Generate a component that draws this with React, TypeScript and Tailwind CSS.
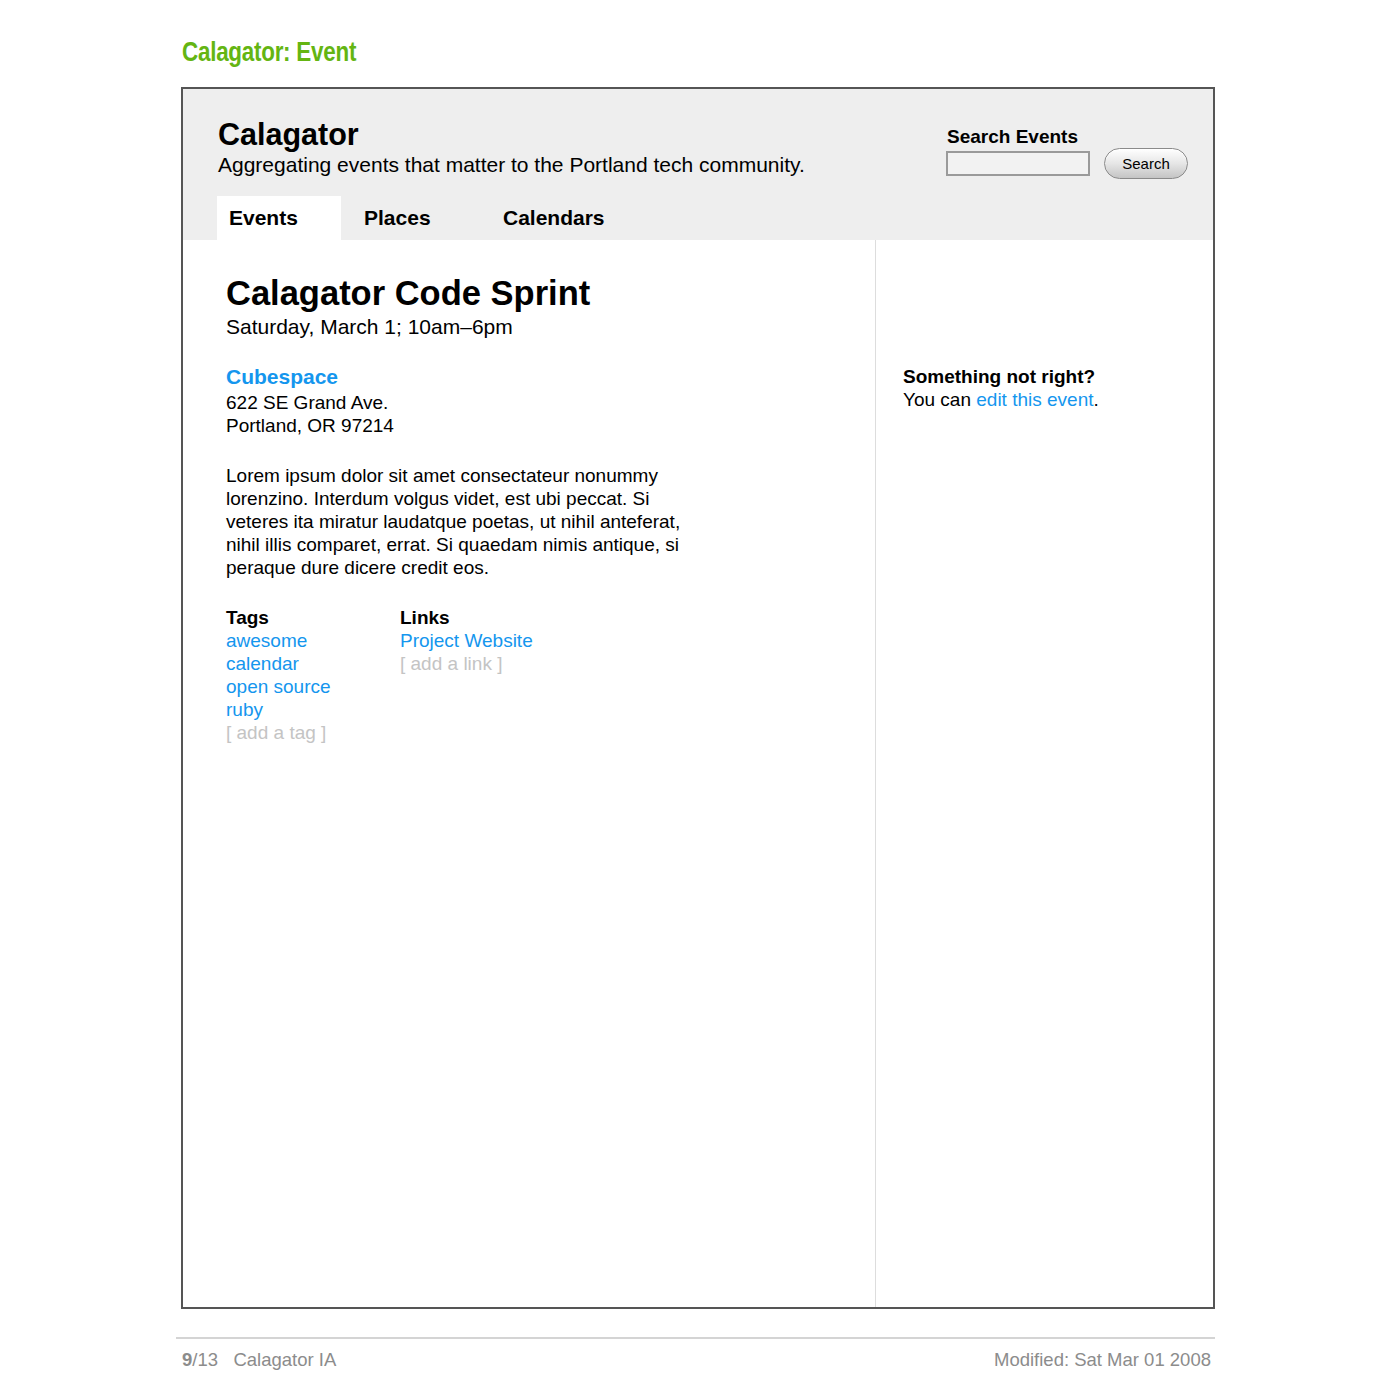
export default function App() {
  const tags = ["awesome", "calendar", "open source", "ruby"];

  return (
    <div className="w-[1400px] h-[1400px] bg-white text-black font-['Liberation_Sans',Arial,sans-serif]">
      <div className="pl-[181px] pt-[37px]">
        {/* page title */}
        <h1 className="h-[30px] mb-[20px] pl-[1px]">
          <span className="inline-block origin-left scale-x-[0.83] text-[27px] leading-[30px] font-bold text-[#64b512] tracking-[-0.3px]">
            Calagator: Event
          </span>
        </h1>

        {/* frame */}
        <div className="w-[1034px] h-[1222px] border-2 border-[#555555] flex flex-col">
          {/* header */}
          <div className="bg-[#eeeeee] h-[151px] flex justify-between shrink-0">
            <div className="pl-[34px] pt-[28px] flex flex-col">
              <div className="text-[30.5px] leading-[34px] font-bold pl-[1px]">Calagator</div>
              <div className="mt-[2px] text-[21px] leading-[24px] pl-[1px]">
                Aggregating events that matter to the Portland tech community.
              </div>
              <div className="flex mt-[19px] h-[44px] text-[21px] font-bold">
                <div className="w-[124px] bg-white pl-[12px] flex items-center">Events</div>
                <div className="w-[150px] pl-[23px] flex items-center">Places</div>
                <div className="pl-[12px] flex items-center">Calendars</div>
              </div>
            </div>

            <div className="pt-[37px] pr-[25px] flex flex-col">
              <div className="text-[19px] leading-[22px] font-bold pl-[1px]">Search Events</div>
              <div className="flex items-center">
                <div className="w-[144px] h-[25px] border-2 border-[#9a9a9a] bg-[#f2f2f2]" />
                <button
                  type="button"
                  className="ml-[14px] w-[84px] h-[31px] rounded-full border border-[#8a8a8a] bg-gradient-to-b from-[#ffffff] via-[#e6e6e6] to-[#c4c4c4] text-[15px] leading-none text-black shadow-[inset_0_1px_1px_rgba(255,255,255,0.9)]"
                >
                  Search
                </button>
              </div>
            </div>
          </div>

          {/* body */}
          <div className="flex flex-1">
            <div className="w-[693px] border-r border-[#dddddd] pl-[43px] pt-[32px]">
              <h2 className="text-[34.5px] leading-[43px] font-bold">Calagator Code Sprint</h2>
              <div className="text-[21px] leading-[24px]">Saturday, March 1; 10am–6pm</div>

              <div className="mt-[24px] text-[21px] leading-[28px] font-bold text-[#1496ee]">Cubespace</div>
              <div className="text-[19px] leading-[23px]">
                <div>622 SE Grand Ave.</div>
                <div>Portland, OR 97214</div>
              </div>

              <p className="mt-[27px] w-[470px] text-[19px] leading-[23px]">
                Lorem ipsum dolor sit amet consectateur nonummy lorenzino. Interdum volgus videt, est ubi peccat. Si
                veteres ita miratur laudatque poetas, ut nihil anteferat, nihil illis comparet, errat. Si quaedam
                nimis antique, si peraque dure dicere credit eos.
              </p>

              <div className="mt-[27px] flex text-[19px] leading-[23px]">
                <div className="w-[174px]">
                  <div className="font-bold">Tags</div>
                  {tags.map((t) => (
                    <div key={t} className="text-[#1496ee]">
                      {t}
                    </div>
                  ))}
                  <div className="text-[#c4c4c4]">[ add a tag ]</div>
                </div>
                <div>
                  <div className="font-bold">Links</div>
                  <div className="text-[#1496ee]">Project Website</div>
                  <div className="text-[#c4c4c4]">[ add a link ]</div>
                </div>
              </div>
            </div>

            <div className="flex-1 pl-[27px] pt-[125px] text-[19px] leading-[23px]">
              <div className="font-bold">Something not right?</div>
              <div>
                You can <span className="text-[#1496ee]">edit this event</span>.
              </div>
            </div>
          </div>
        </div>

        {/* footer */}
        <div className="ml-[-5px] mt-[28px] w-[1039px] border-t-2 border-[#d4d4d4] pt-[10px] flex justify-between text-[18.5px] leading-[22px] text-[#8c8c8c] px-[6px] pr-[4px]">
          <div>
            <span className="font-bold">9</span>/13&nbsp;&nbsp; Calagator IA
          </div>
          <div>Modified: Sat Mar 01 2008</div>
        </div>
      </div>
    </div>
  );
}
